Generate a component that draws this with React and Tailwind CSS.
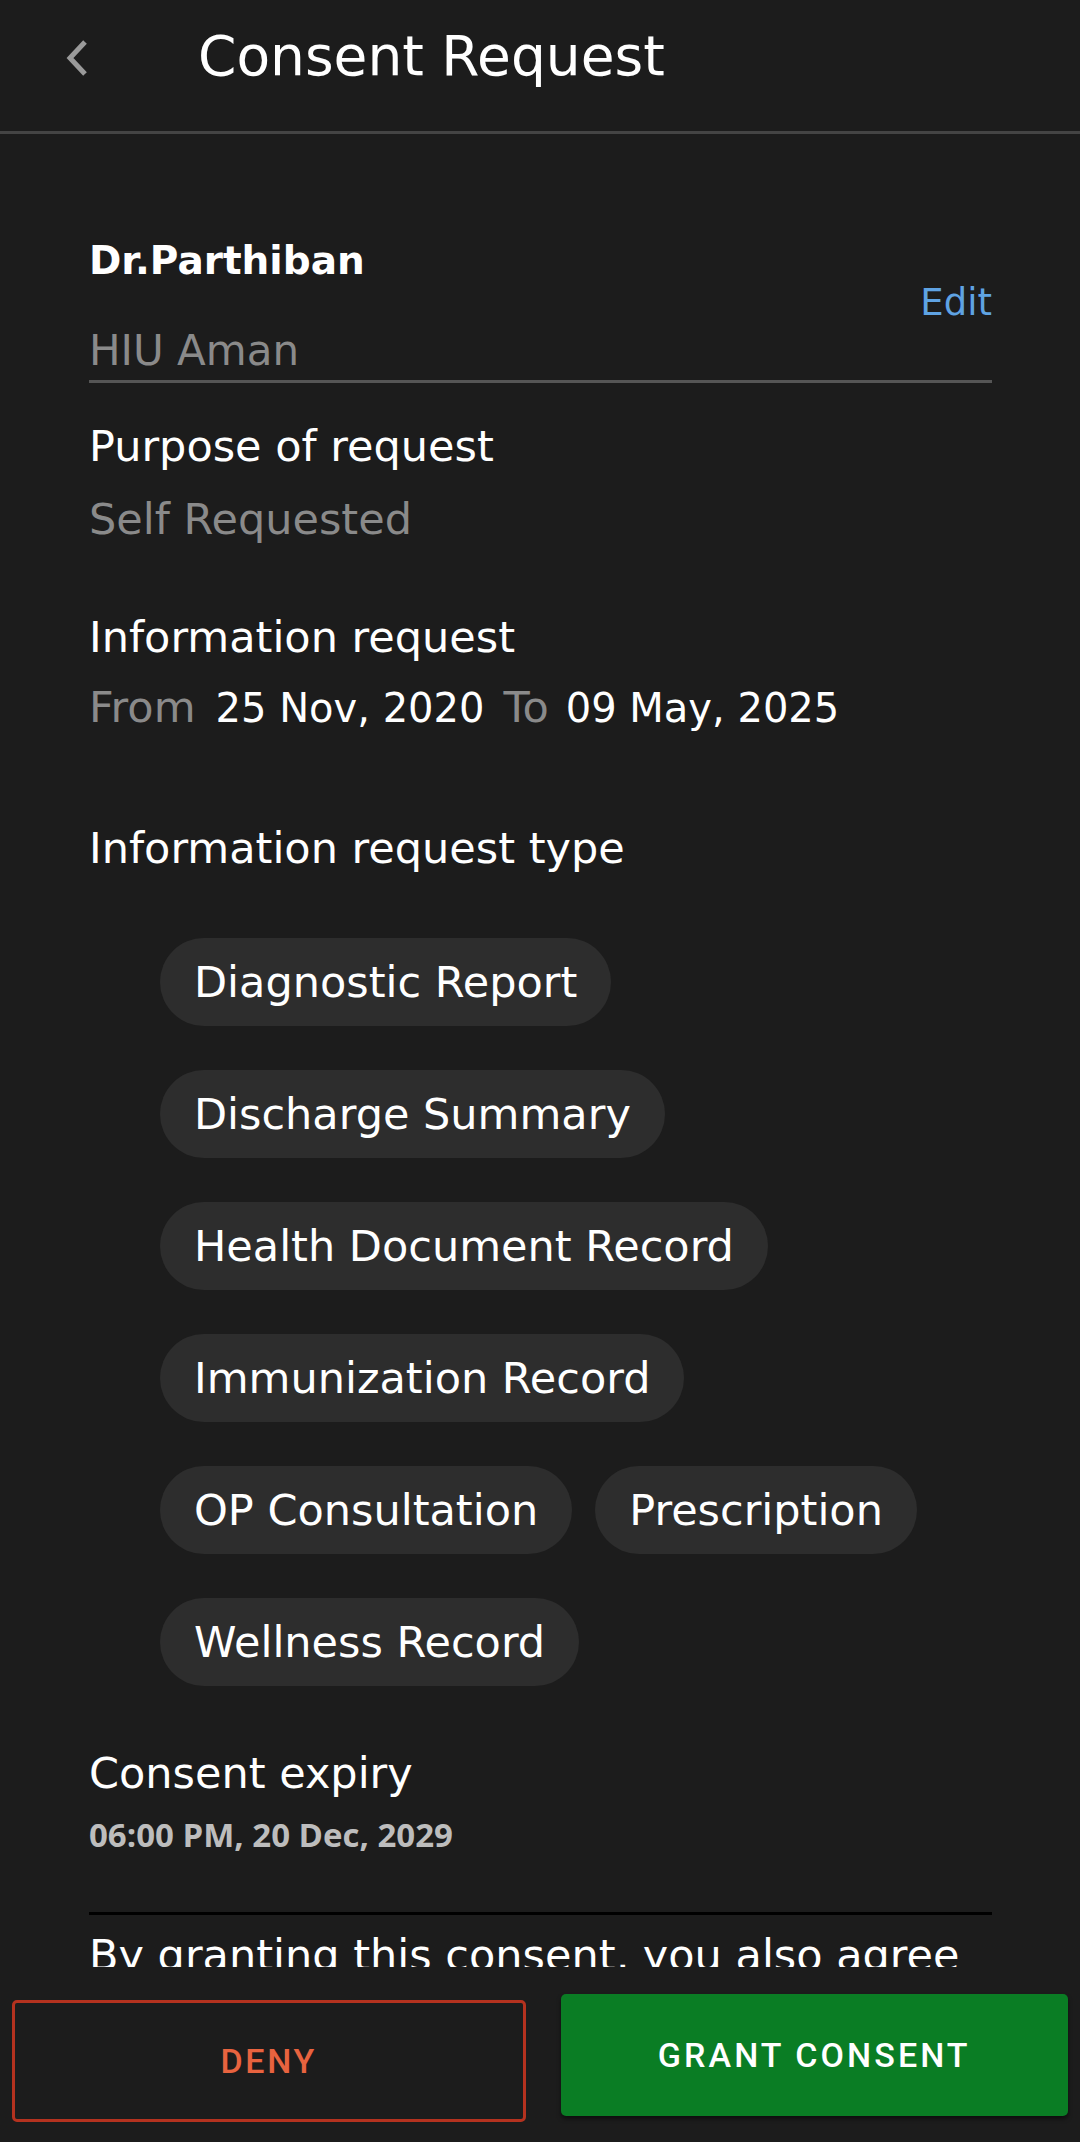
import React from "react";

const body = { fontFamily: '"DejaVu Sans", "Open Sans", sans-serif' };
const openSans = { fontFamily: '"Open Sans", "Noto Sans", sans-serif' };
const roboto = { fontFamily: '"Roboto", sans-serif' };

const rows = [
  ["Diagnostic Report"],
  ["Discharge Summary"],
  ["Health Document Record"],
  ["Immunization Record"],
  ["OP Consultation", "Prescription"],
  ["Wellness Record"],
];

const Chip = ({ label }) => (
  <div className="h-[88px] px-[34px] rounded-full bg-[#2d2d2d] flex items-center text-[43px] leading-none text-white">
    {label}
  </div>
);

const App = () => {
  return (
    <div className="h-[2142px] w-[1080px] bg-[#1c1c1c] flex flex-col overflow-hidden" style={body}>
      {/* top bar */}
      <div className="h-[134px] shrink-0 border-b-[3px] border-[#444444]">
        <div className="h-[106px] flex items-center">
          <svg className="ml-[64px] mt-[10px]" width="26" height="38" viewBox="0 0 26 38" fill="none">
            <path d="M21 3 L6 19 L21 35" stroke="#9a9a9a" strokeWidth="5" strokeLinecap="butt" strokeLinejoin="miter" />
          </svg>
          <h1 className="ml-[108px] mt-[6px] text-[55px] leading-[76px] text-white font-normal">Consent Request</h1>
        </div>
      </div>

      {/* scrolling content */}
      <div className="flex-1 overflow-hidden">
        <div className="pl-[89px] pr-[88px] pt-[100px]">
          <div className="flex items-center border-b-[3px] border-[#555555] pb-[2px]">
            <div className="flex-1 flex flex-col">
              <div className="text-[39px] leading-[54px] font-bold text-white">Dr.Parthiban</div>
              <div className="mt-[36px] text-[42px] leading-[54px] text-[#8a8a8a]">HIU Aman</div>
            </div>
            <button className="mb-[6px] text-[37px] leading-[54px] text-[#5fa3e3]">Edit</button>
          </div>

          <div className="mt-[33px] text-[43px] leading-[60px] text-white">Purpose of request</div>
          <div className="mt-[13px] text-[43px] leading-[60px] text-[#8a8a8a]">Self Requested</div>

          <div className="mt-[58px] text-[43px] leading-[60px] text-white">Information request</div>
          <div className="mt-[10px] flex items-baseline leading-[60px]">
            <span className="text-[43px] text-[#8a8a8a]">From</span>
            <span className="ml-[20px] text-[40px] text-white">25 Nov, 2020</span>
            <span className="ml-[19px] text-[43px] text-[#8a8a8a]">To</span>
            <span className="ml-[17px] text-[40px] text-white">09 May, 2025</span>
          </div>

          <div className="mt-[80px] text-[43px] leading-[60px] text-white">Information request type</div>

          <div className="mt-[60px] ml-[71px] flex flex-col gap-[44px]">
            {rows.map((row, i) => (
              <div key={i} className="flex gap-[23px]">
                {row.map((label) => (
                  <Chip key={label} label={label} />
                ))}
              </div>
            ))}
          </div>

          <div className="mt-[57px] text-[43px] leading-[60px] text-white">Consent expiry</div>
          <div className="mt-[9px] text-[33px] leading-[46px] font-bold text-[#bdbdbd]" style={openSans}>
            06:00 PM, 20 Dec, 2029
          </div>

          <div className="mt-[54px] h-[3px] bg-black" />
          <div className="mt-[10px] text-[43px] leading-[60px] text-white whitespace-nowrap">
            By granting this consent, you also agree
          </div>
        </div>
      </div>

      {/* bottom actions */}
      <div className="h-[175px] shrink-0 flex items-start px-[12px] pt-[27px] gap-[35px]">
        <button
          className="mt-[6px] flex-1 h-[122px] rounded-[5px] border-[3px] border-[#b4321f] text-[#e8633f] text-[34px] tracking-[0.08em] font-medium"
          style={roboto}
        >
          DENY
        </button>
        <button
          className="flex-1 h-[122px] rounded-[5px] bg-[#0a7d24] shadow-[0_3px_4px_rgba(0,0,0,0.5)] text-white text-[34px] tracking-[0.09em] font-medium"
          style={roboto}
        >
          GRANT CONSENT
        </button>
      </div>
    </div>
  );
};

export default App;
